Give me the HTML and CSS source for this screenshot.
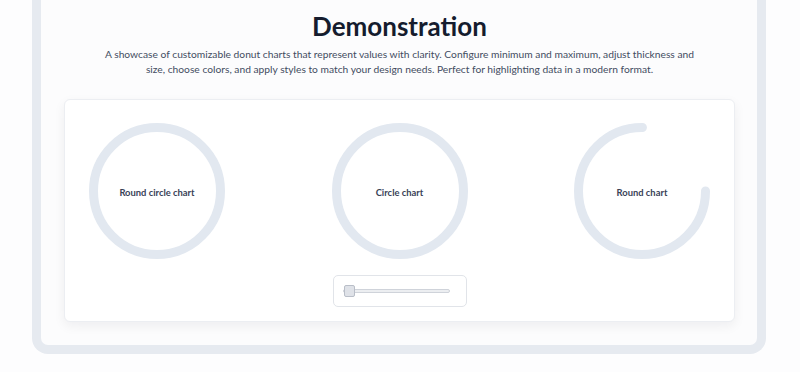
FILE: index.html
```html
<!DOCTYPE html>
<html>
<head>
  <title>Donut Charts</title>
  <link rel="stylesheet" href="styles.css">
</head>
<body>
  <div class="frame">
    <h1 class="title">Demonstration</h1>
    <p class="lead">A showcase of customizable donut charts that represent values with clarity. Configure minimum and maximum, adjust thickness and size, choose colors, and apply styles to match your design needs. Perfect for highlighting data in a modern format.</p>

    <div class="card">
      <div class="charts">
        <div class="chart">
          <svg width="136" height="136" viewBox="0 0 136 136">
            <circle cx="68" cy="68" r="63.5" class="ring"/>
          </svg>
          <span class="chart-label">Round circle chart</span>
        </div>
        <div class="chart">
          <svg width="136" height="136" viewBox="0 0 136 136">
            <circle cx="68" cy="68" r="63.5" class="ring"/>
          </svg>
          <span class="chart-label">Circle chart</span>
        </div>
        <div class="chart">
          <svg width="136" height="136" viewBox="0 0 136 136">
            <circle cx="68" cy="68" r="63.5" class="ring round" stroke-dasharray="299.2 400"/>
          </svg>
          <span class="chart-label">Round chart</span>
        </div>
      </div>

      <div class="slider-box">
        <input type="range" min="0" max="100" value="0" class="slider">
      </div>
    </div>
  </div>
</body>
</html>
```

FILE: styles.css
```css
body {
  margin: 0;
  background-color: #fdfdfe;
  font-family: Lato, "Liberation Sans", sans-serif;
}

.frame {
  width: 734px;
  margin-left: 32px;
  padding: 10px 22px 23px 23px;
  box-sizing: border-box;
  background-color: #fcfcfd;
  border: 9px solid #e6eaf0;
  border-top: none;
  border-radius: 0 0 16px 16px;
}

.title {
  margin: 0;
  font-size: 26px;
  line-height: 32px;
  font-weight: 700;
  color: #151c2e;
  text-align: center;
}

.lead {
  margin: 5px auto 22px;
  max-width: 600px;
  font-size: 10.25px;
  line-height: 15px;
  color: #434c61;
  text-align: center;
}

.card {
  background-color: #fff;
  border: 1px solid #eceef2;
  border-radius: 6px;
  box-shadow: 0 4px 12px rgba(15, 23, 42, 0.06);
  padding: 23px 24px 14px;
  display: flex;
  flex-direction: column;
  align-items: center;
}

.charts {
  width: 100%;
  display: flex;
  justify-content: space-between;
}

.chart {
  position: relative;
  width: 136px;
  height: 136px;
}

.chart svg {
  display: block;
}

.ring {
  fill: none;
  stroke: #e2e8f0;
  stroke-width: 9;
}

.ring.round {
  stroke-linecap: round;
}

.chart-label {
  position: absolute;
  top: 1px;
  left: 0;
  width: 100%;
  height: 100%;
  display: flex;
  align-items: center;
  justify-content: center;
  font-size: 9.4px;
  font-weight: 700;
  color: #394257;
}

.slider-box {
  margin-top: 16px;
  width: 134px;
  height: 32px;
  box-sizing: border-box;
  border: 1px solid #e1e4e9;
  border-radius: 5px;
  display: flex;
  align-items: center;
  padding: 0 16px 0 9px;
}

.slider {
  -webkit-appearance: none;
  appearance: none;
  width: 100%;
  height: 12px;
  margin: 0;
  background: transparent;
}

.slider::-webkit-slider-runnable-track {
  height: 4px;
  background: #eceef1;
  border: 1px solid #cfd3da;
  border-radius: 2px;
}

.slider::-webkit-slider-thumb {
  -webkit-appearance: none;
  appearance: none;
  width: 11px;
  height: 12px;
  margin-top: -5px;
  background: #dfe2e8;
  border: 1px solid #b9bec8;
  border-radius: 2px;
}
```
